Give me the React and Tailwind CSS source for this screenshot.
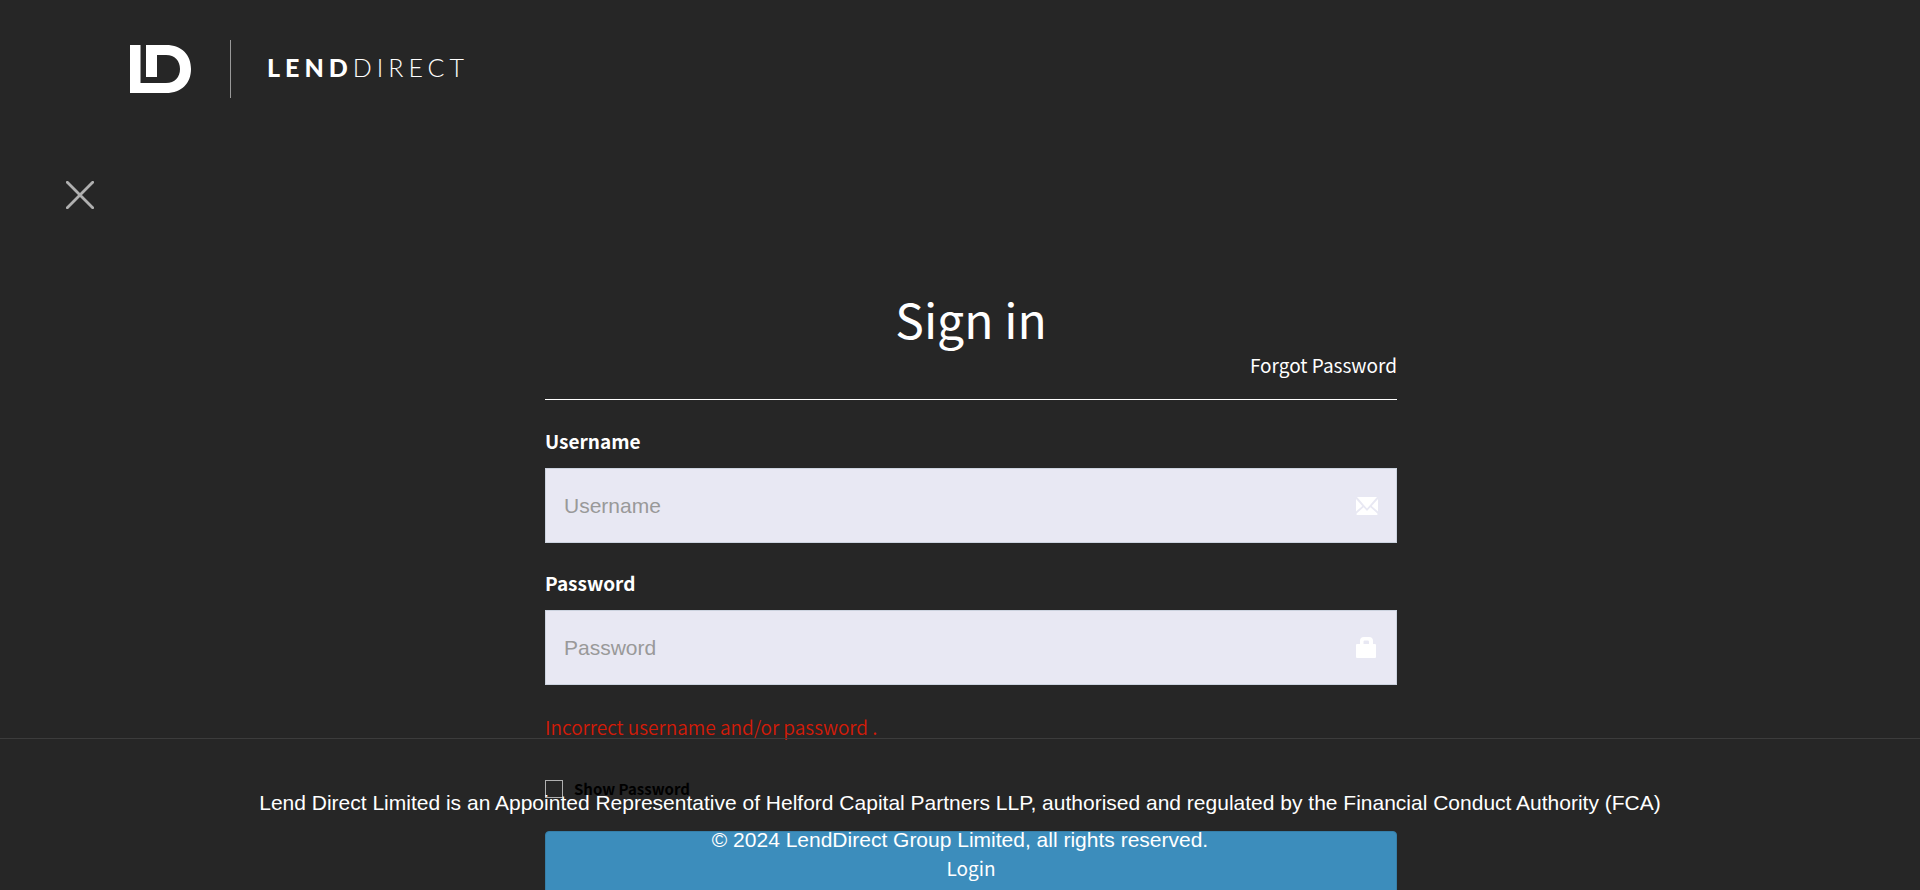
const sans = "font-['Noto_Sans_CJK_SC',sans-serif]";

function Logo() {
  return (
    <a href="#" aria-label="LendDirect home" className="flex h-[58px] items-center text-white">
      <svg className="h-12 w-[61px]" viewBox="0 0 61 48" fill="currentColor" aria-hidden="true">
        <path d="M0 0H10.5V38H36C45 38 50 32 50 24S45 10 36 10H27V32H16V0H36C52 0 61 10 61 24S52 48 36 48H0Z" />
      </svg>
      <span className="ml-[39px] h-full w-px bg-[#999999]" />
      <span className="ml-9 pb-1 font-['Lato',sans-serif] text-[25px] leading-8 tracking-[0.2em]">
        <span className="font-black">LEND</span>
        <span className="font-light">DIRECT</span>
      </span>
    </a>
  );
}

function EnvelopeIcon() {
  return (
    <svg className="h-[18px] w-[22px]" viewBox="0 0 22 18" fill="#ffffff" aria-hidden="true">
      <path d="M1 0H21L11 11.5Z" />
      <path d="M0 2L6.3 8.9L0 14.6Z" />
      <path d="M22 2L15.7 8.9L22 14.6Z" />
      <path d="M7.6 10.2L11 14L14.4 10.2L21.4 16.6V18H0.6V16.6Z" />
    </svg>
  );
}

function LockIcon() {
  return (
    <svg className="mr-0.5 h-[21px] w-5" viewBox="0 0 20 21" fill="#ffffff" fillRule="evenodd" aria-hidden="true">
      <path d="M4 7V4Q4 0 8 0H13Q17 0 17 4V7H19Q20 7 20 8V20Q20 21 19 21H1Q0 21 0 20V8Q0 7 1 7ZM7.5 7H13V4.8Q13 3.6 11.8 3.6H8.7Q7.5 3.6 7.5 4.8Z" />
    </svg>
  );
}

function Field({ id, label, type, icon }) {
  return (
    <div className="flex flex-col">
      <label htmlFor={id} className="mb-3 text-[19px] leading-[30px] font-bold text-white">
        {label}
      </label>
      <div className="relative">
        <input
          id={id}
          type={type}
          placeholder={label}
          className="block h-[75px] w-full border border-[#ccd3df] bg-[#e8e8f3] pr-16 pl-[18px] font-['Liberation_Sans',sans-serif] text-[21px] text-[#333333] placeholder:text-[#999999]"
        />
        <span className="pointer-events-none absolute inset-y-0 right-[19px] flex items-center">{icon}</span>
      </div>
    </div>
  );
}

export default function App() {
  return (
    <div className={`relative h-screen overflow-hidden bg-[#262626] ${sans}`}>
      <header className="flex pt-10 pl-[130px]">
        <Logo />
      </header>

      <button type="button" aria-label="Close" className="mt-[83px] ml-[66px] block text-[#b0b0b0]">
        <svg className="size-7" viewBox="0 0 28 28" fill="none" stroke="currentColor" strokeWidth="2.8" strokeLinecap="round">
          <path d="M1.3 1.3L26.7 26.7M26.7 1.3L1.3 26.7" />
        </svg>
      </button>

      <main className="pt-[78px] pl-[22px]">
        <form className="mx-auto flex max-w-[852px] flex-col" onSubmit={(e) => e.preventDefault()}>
          <div className="flex flex-col border-b border-white pb-[19px]">
            <h1 className="text-center text-[48px] leading-[63px] text-white">Sign in</h1>
            <a href="#" className="self-end text-[19px] leading-[30px] text-white">
              Forgot Password
            </a>
          </div>

          <div className="mt-[26px] flex flex-col gap-[25px]">
            <Field id="username" label="Username" type="text" icon={<EnvelopeIcon />} />
            <Field id="password" label="Password" type="password" icon={<LockIcon />} />
          </div>

          <p role="alert" className="mt-[27px] text-[19px] leading-[30px] font-[350] text-[#d31b08]">
            Incorrect username and/or password .
          </p>

          <div className="mt-[37px] flex items-center gap-[11px]">
            <input
              id="show-password"
              type="checkbox"
              className="size-[18px] appearance-none border border-[#b0b0b0]"
            />
            <label htmlFor="show-password" className="text-[15px] leading-5 font-bold text-black">
              Show Password
            </label>
          </div>

          <button
            type="submit"
            className="mt-8 h-[74px] rounded-[4px] border border-[#367fa9] bg-[#3c8dbc] text-[19px] text-white"
          >
            Login
          </button>
        </form>
      </main>

      <footer className="pointer-events-none absolute inset-x-0 bottom-0 flex h-[152px] flex-col items-center border-t border-[#3c3c3c] pt-[45px] font-['Liberation_Sans',sans-serif] text-[21px] leading-[37px] text-white">
        <p>
          Lend Direct Limited is an Appointed Representative of Helford Capital Partners LLP, authorised and regulated
          by the Financial Conduct Authority (FCA)
        </p>
        <p>© 2024 LendDirect Group Limited, all rights reserved.</p>
      </footer>
    </div>
  );
}
